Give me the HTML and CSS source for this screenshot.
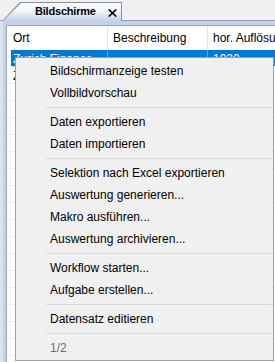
FILE: index.html
```html
<!DOCTYPE html>
<html lang="de">
<head>
<meta charset="utf-8">
<title>Bildschirme</title>
<link rel="stylesheet" href="styles.css">
</head>
<body>
<div class="window">
  <div class="tabstrip">
    <div class="tab">
      <div class="tab-face">
        <span class="tab-title">Bildschirme</span>
        <svg class="tab-close" width="9" height="8" viewBox="0 0 9 8"><path d="M0.7 0.5 L8.3 7.5 M8.3 0.5 L0.7 7.5" stroke="#000" stroke-width="1.6" fill="none"/></svg>
      </div>
    </div>
  </div>
  <div class="panel">
    <div class="list">
      <div class="row header">
        <div class="cell c1">Ort</div>
        <div class="cell c2">Beschreibung</div>
        <div class="cell c3">hor. Auflösung</div>
      </div>
      <div class="row selected">
        <div class="cell c1">Zurich Finance</div>
        <div class="cell c2"></div>
        <div class="cell c3">1920</div>
      </div>
      <div class="row">
        <div class="cell c1">Zürich Büro</div>
        <div class="cell c2"></div>
        <div class="cell c3">1680</div>
      </div>
      <div class="rows-empty"></div>
    </div>
  </div>
  <div class="menu">
    <div class="item">Bildschirmanzeige testen</div>
    <div class="item">Vollbildvorschau</div>
    <div class="sep"></div>
    <div class="item">Daten exportieren</div>
    <div class="item">Daten importieren</div>
    <div class="sep"></div>
    <div class="item">Selektion nach Excel exportieren</div>
    <div class="item">Auswertung generieren...</div>
    <div class="item">Makro ausführen...</div>
    <div class="item">Auswertung archivieren...</div>
    <div class="sep"></div>
    <div class="item">Workflow starten...</div>
    <div class="item">Aufgabe erstellen...</div>
    <div class="sep"></div>
    <div class="item">Datensatz editieren</div>
    <div class="sep"></div>
    <div class="item disabled">1/2</div>
  </div>
</div>
</body>
</html>
```
FILE: styles.css
```css
* { box-sizing: border-box; }
html, body { margin: 0; padding: 0; }
body {
  background: #f0f0f0;
  font-family: "Liberation Sans", Arial, sans-serif;
  font-size: 12px;
  color: #000;
}
.window {
  position: relative;
  width: 275px;
  height: 362px;
  overflow: hidden;
  display: flex;
  flex-direction: column;
}
.tabstrip {
  height: 21px;
  flex: none;
  display: flex;
  align-items: flex-end;
  padding-left: 2px;
  border-bottom: 1px solid #8f9bb3;
  background: #f0f0f0;
}
.tab {
  position: relative;
  z-index: 1;
  width: 120px;
  height: 19px;
  margin-bottom: -1px;
  padding: 1px 1px 0 1px;
  background: #898f9c;
  clip-path: polygon(0 100%, 18px 0, 100% 0, 100% 100%);
}
.tab-face {
  height: 100%;
  display: flex;
  align-items: center;
  padding-left: 32px;
  background: linear-gradient(#fdfdfe 0%, #f2f5fa 45%, #c3d1ea 100%);
  clip-path: polygon(0 100%, 18px 0, 100% 0, 100% 100%);
}
.tab-title {
  font-weight: bold;
  font-size: 11px;
  letter-spacing: -0.2px;
  line-height: 18px;
  margin-top: -2px;
}
.tab-close {
  margin-left: 12px;
  margin-top: 1px;
  display: block;
}
.panel {
  flex: 1;
  display: flex;
  background: #c3d1ea;
  border-left: 3px solid #dce3ef;
  padding: 4px 3px 0 3px;
}
.list {
  flex: 1;
  display: flex;
  flex-direction: column;
  background: #fff;
  border: 1px solid #9aa5bb;
  border-bottom: none;
}
.row {
  display: flex;
  height: 17px;
  line-height: 17px;
  border-bottom: 1px solid #f0f0f0;
}
.row:not(.header) .cell { padding-top: 2px; line-height: 15px; }
.row.header {
  height: 24px;
  line-height: 24px;
  border-bottom: none;
}
.cell {
  white-space: nowrap;
  overflow: hidden;
  padding-left: 5px;
  border-right: 1px solid #e5e5e5;
}
.row:not(.header) .cell { border-right-color: transparent; }
.c1 { width: 101px; padding-left: 6px; }
.c2 { width: 100px; }
.c3 { flex: 1; border-right: none; }
.row.selected { color: #fff; }
.row.selected .cell { background: #0078d7; border-right-color: #5aa5e6; }
.row.selected .c1 { background: linear-gradient(to right, #fff 4px, #0078d7 4px); }
.rows-empty {
  flex: 1;
  background: repeating-linear-gradient(to bottom, #fff 0 16px, #f0f0f0 16px 17px);
}
.menu {
  position: absolute;
  left: 15px;
  top: 57px;
  width: 259px;
  height: 304px;
  background: #f0f0f0;
  border: 1px solid #a0a0a0;
  padding: 2px 2px 1px 2px;
  display: flex;
  flex-direction: column;
}
.item {
  height: 22px;
  line-height: 22px;
  padding-left: 32px;
  white-space: nowrap;
}
.item.disabled { color: #6d6d6d; }
.sep {
  height: 7px;
  margin-left: 28px;
  padding-top: 3px;
}
.sep::before {
  content: "";
  display: block;
  height: 1px;
  background: #d7d7d7;
}
```
